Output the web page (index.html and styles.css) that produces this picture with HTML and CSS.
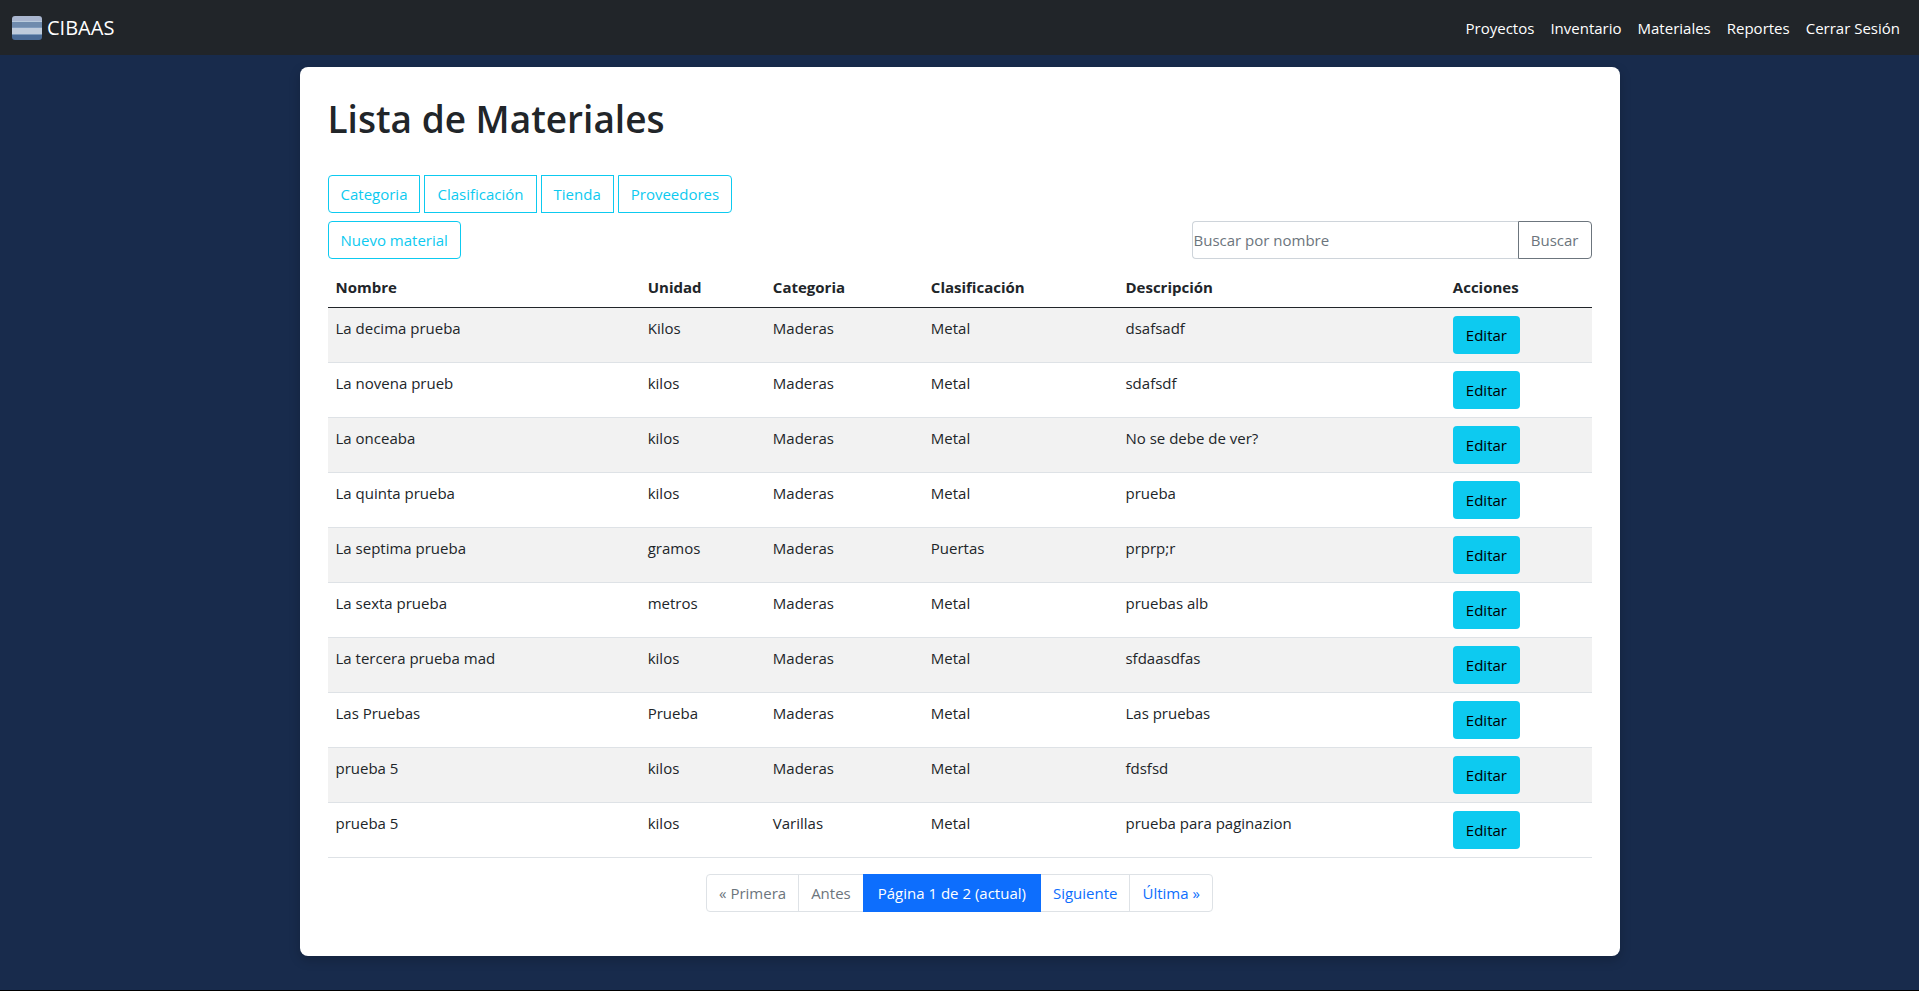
FILE: index.html
```html
<!DOCTYPE html>
<html lang="es">
<head>
<meta charset="utf-8">
<meta name="viewport" content="width=device-width, initial-scale=1">
<title>CIBAAS - Lista de Materiales</title>
<link rel="stylesheet" href="styles.css">
</head>
<body>
<header class="navbar">
  <a class="brand" href="#">
    <svg class="brand-logo" viewBox="0 0 30 24" aria-hidden="true">
      <defs><clipPath id="logo-shape"><rect width="30" height="24" rx="3"/></clipPath></defs>
      <g clip-path="url(#logo-shape)">
        <rect width="30" height="6" fill="#a9b6cf"/>
        <rect y="5" width="30" height="1" fill="#b9cbdc"/>
        <rect y="6" width="30" height="6" fill="#6f8bad"/>
        <rect y="11" width="30" height="1" fill="#7f9bbd"/>
        <rect y="12" width="30" height="6" fill="#bfccdc"/>
        <rect y="18" width="30" height="6" fill="#4a6b96"/>
        <rect y="18" width="30" height="1" fill="#7d9abb"/>
      </g>
    </svg>
    <span>CIBAAS</span>
  </a>
  <nav class="nav-links">
    <a href="#">Proyectos</a>
    <a href="#">Inventario</a>
    <a href="#">Materiales</a>
    <a href="#">Reportes</a>
    <a href="#">Cerrar Sesión</a>
  </nav>
</header>

<main class="card">
  <h1 class="title">Lista de Materiales</h1>
  <div class="btn-group">
    <a class="btn btn-outline" href="#">Categoria</a>
    <a class="btn btn-outline" href="#">Clasificación</a>
    <a class="btn btn-outline" href="#">Tienda</a>
    <a class="btn btn-outline" href="#">Proveedores</a>
  </div>
  <div class="toolbar">
    <a class="btn btn-outline" href="#">Nuevo material</a>
    <form class="search">
      <input class="search-input" type="text" placeholder="Buscar por nombre" aria-label="Buscar por nombre">
      <button class="btn search-btn" type="submit">Buscar</button>
    </form>
  </div>

  <table class="table">
    <colgroup>
      <col class="col-nombre"><col class="col-unidad"><col class="col-categoria"><col class="col-clasificacion"><col class="col-descripcion"><col>
    </colgroup>
    <thead>
      <tr><th>Nombre</th><th>Unidad</th><th>Categoria</th><th>Clasificación</th><th>Descripción</th><th>Acciones</th></tr>
    </thead>
    <tbody>
      <tr><td>La decima prueba</td><td>Kilos</td><td>Maderas</td><td>Metal</td><td>dsafsadf</td><td><a class="btn btn-info" href="#">Editar</a></td></tr>
      <tr><td>La novena prueb</td><td>kilos</td><td>Maderas</td><td>Metal</td><td>sdafsdf</td><td><a class="btn btn-info" href="#">Editar</a></td></tr>
      <tr><td>La onceaba</td><td>kilos</td><td>Maderas</td><td>Metal</td><td>No se debe de ver?</td><td><a class="btn btn-info" href="#">Editar</a></td></tr>
      <tr><td>La quinta prueba</td><td>kilos</td><td>Maderas</td><td>Metal</td><td>prueba</td><td><a class="btn btn-info" href="#">Editar</a></td></tr>
      <tr><td>La septima prueba</td><td>gramos</td><td>Maderas</td><td>Puertas</td><td>prprp;r</td><td><a class="btn btn-info" href="#">Editar</a></td></tr>
      <tr><td>La sexta prueba</td><td>metros</td><td>Maderas</td><td>Metal</td><td>pruebas alb</td><td><a class="btn btn-info" href="#">Editar</a></td></tr>
      <tr><td>La tercera prueba mad</td><td>kilos</td><td>Maderas</td><td>Metal</td><td>sfdaasdfas</td><td><a class="btn btn-info" href="#">Editar</a></td></tr>
      <tr><td>Las Pruebas</td><td>Prueba</td><td>Maderas</td><td>Metal</td><td>Las pruebas</td><td><a class="btn btn-info" href="#">Editar</a></td></tr>
      <tr><td>prueba 5</td><td>kilos</td><td>Maderas</td><td>Metal</td><td>fdsfsd</td><td><a class="btn btn-info" href="#">Editar</a></td></tr>
      <tr><td>prueba 5</td><td>kilos</td><td>Varillas</td><td>Metal</td><td>prueba para paginazion</td><td><a class="btn btn-info" href="#">Editar</a></td></tr>
    </tbody>
  </table>

  <nav aria-label="Paginación">
    <ul class="pagination">
      <li><a class="page disabled" href="#" aria-disabled="true">« Primera</a></li>
      <li><a class="page disabled" href="#" aria-disabled="true">Antes</a></li>
      <li><a class="page active" href="#" aria-current="page">Página 1 de 2 (actual)</a></li>
      <li><a class="page" href="#">Siguiente</a></li>
      <li><a class="page" href="#">Última »</a></li>
    </ul>
  </nav>
</main>
</body>
</html>
```
FILE: styles.css
```css
*, *::before, *::after { box-sizing: border-box; }

body {
  margin: 0;
  min-height: 100vh;
  border-bottom: 1px solid #000;
  background: #182b4c;
  color: #212529;
  font-family: "Segoe UI", "Open Sans", "Noto Sans", sans-serif;
  font-size: 15px;
  line-height: 24px;
}

a { text-decoration: none; }

.navbar {
  display: flex;
  align-items: center;
  justify-content: space-between;
  min-height: 55px;
  padding: 0 19px 0 12px;
  background: #212529;
}

.brand {
  display: flex;
  align-items: center;
  gap: 5px;
  color: #fff;
  font-size: 20px;
}

.brand-logo { width: 30px; height: 24px; }

.nav-links { display: flex; gap: 16px; }
.nav-links a { color: #fff; }

.card {
  max-width: 1320px;
  margin: 12px auto 34px;
  padding: 28px 28px 44px;
  border-radius: 8px;
  background: #fff;
  box-shadow: 0 4px 12px rgba(0, 0, 0, .2);
}

.title {
  margin: 0 0 32px;
  font-size: 37px;
  font-weight: 600;
  line-height: 48px;
}

.btn {
  display: inline-block;
  padding: 6px 12px;
  border: 1px solid transparent;
  border-radius: 4px;
  background: transparent;
  font: inherit;
  text-align: center;
  cursor: pointer;
}

.btn-outline { border-color: #0dcaf0; color: #0dcaf0; }
.btn-info { background: #0dcaf0; color: #000; vertical-align: top; }

.btn-group { display: flex; gap: 4px; }
.btn-group .btn { border-radius: 0; }
.btn-group .btn:first-child { border-radius: 4px 0 0 4px; }
.btn-group .btn:last-child { border-radius: 0 4px 4px 0; }

.toolbar {
  display: flex;
  justify-content: space-between;
  margin: 8px 0;
}

.search { display: flex; width: 400px; }

.search-input {
  flex: 1;
  min-width: 0;
  padding: 0 1px;
  border: 1px solid #ced4da;
  border-right: 0;
  border-radius: 4px 0 0 4px;
  color: #212529;
  font: inherit;
}
.search-input::placeholder { color: #6c757d; opacity: 1; }

.search-btn {
  border-color: #6c757d;
  border-radius: 0 4px 4px 0;
  color: #6c757d;
}

.table {
  width: 100%;
  margin-bottom: 16px;
  border-spacing: 0;
  table-layout: fixed;
}
.table th, .table td {
  padding: 8px;
  border-bottom: 1px solid #dee2e6;
  text-align: left;
  vertical-align: top;
}
.table th { border-bottom-color: #212529; font-weight: 700; }
.table tbody tr:nth-child(odd) { background: #f2f2f2; }

.col-nombre { width: 24.7%; }
.col-unidad { width: 9.9%; }
.col-categoria { width: 12.5%; }
.col-clasificacion { width: 15.4%; }
.col-descripcion { width: 25.9%; }

.pagination {
  display: flex;
  justify-content: center;
  margin: 0;
  padding: 0;
  list-style: none;
}
.page {
  display: block;
  padding: 6px 12px;
  border: 1px solid #dee2e6;
  color: #0d6efd;
}
.pagination li + li { margin-left: -1px; }
.pagination li:first-child .page { border-radius: 4px 0 0 4px; }
.pagination li:last-child .page { border-radius: 0 4px 4px 0; }
.page.disabled { color: #6c757d; }
.page.active {
  position: relative;
  padding: 6px 14px;
  border-color: #0d6efd;
  background: #0d6efd;
  color: #fff;
}
```
